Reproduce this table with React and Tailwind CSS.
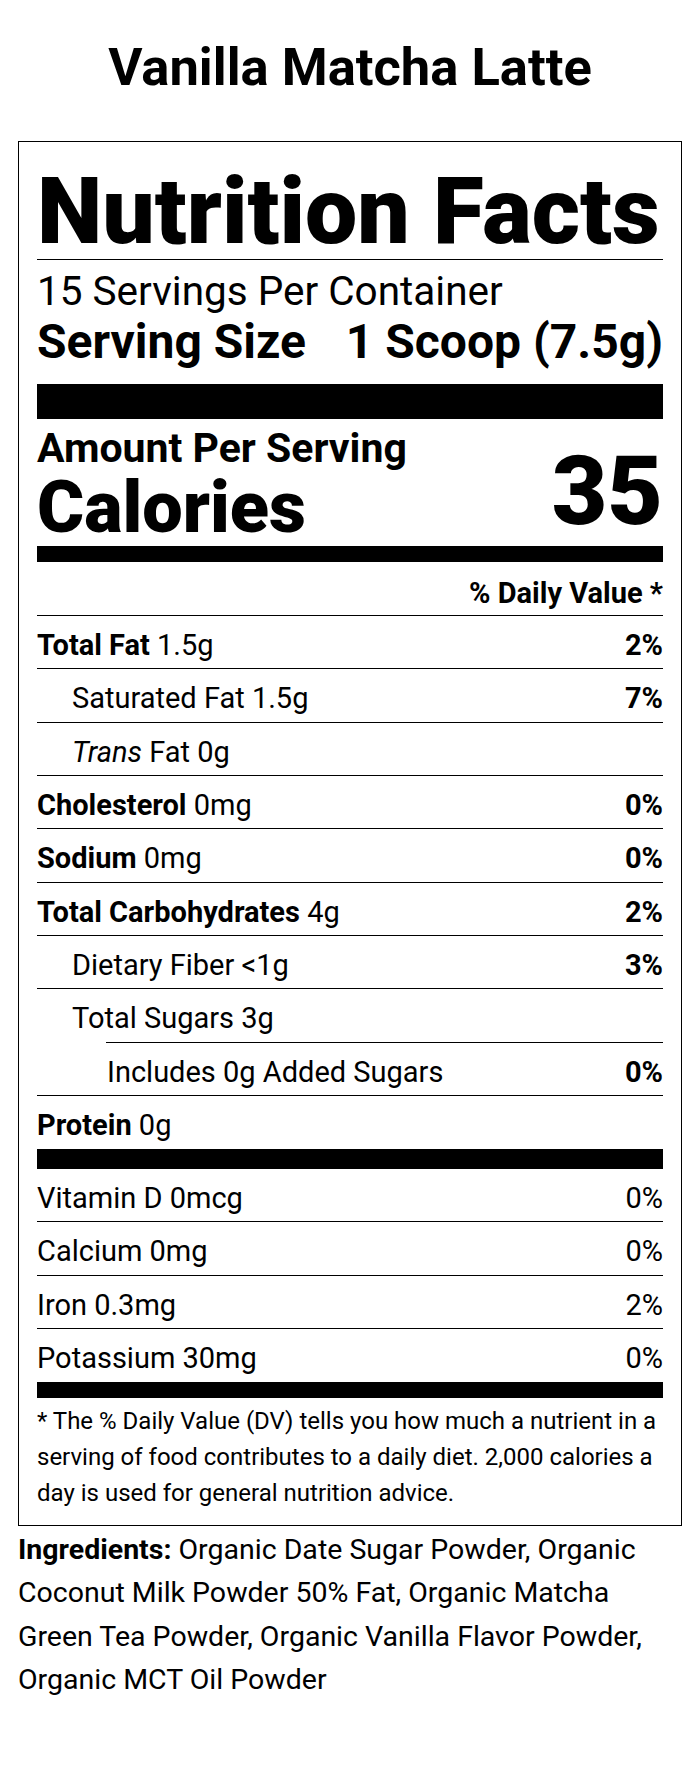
const font = { fontFamily: 'Roboto, "Noto Sans", sans-serif' }

const rows = [
  { bold: 'Total Fat', rest: ' 1.5g', dv: '2%' },
  { label: 'Saturated Fat 1.5g', dv: '7%', indent: 1 },
  { trans: true, indent: 1 },
  { bold: 'Cholesterol', rest: ' 0mg', dv: '0%' },
  { bold: 'Sodium', rest: ' 0mg', dv: '0%' },
  { bold: 'Total Carbohydrates', rest: ' 4g', dv: '2%' },
  { label: 'Dietary Fiber <1g', dv: '3%', indent: 1 },
  { label: 'Total Sugars 3g', indent: 1, lineIndent: true },
  { label: 'Includes 0g Added Sugars', dv: '0%', indent: 2 },
]

const vitamins = [
  { label: 'Vitamin D 0mcg', dv: '0%' },
  { label: 'Calcium 0mg', dv: '0%' },
  { label: 'Iron 0.3mg', dv: '2%' },
]

function Row({ row, last }) {
  const pad = row.indent === 2 ? 'pl-[70px]' : row.indent === 1 ? 'pl-[35px]' : ''
  return (
    <div>
      <div className={`flex justify-between h-[52.33px] pt-[5.8px] text-[29px] leading-[46.5px] ${pad}`}>
        <span>
          {row.trans ? (
            <>
              <i>Trans</i> Fat 0g
            </>
          ) : row.bold ? (
            <>
              <b>{row.bold}</b>
              {row.rest}
            </>
          ) : (
            row.label
          )}
        </span>
        {row.dv && <b>{row.dv}</b>}
      </div>
      {!last && <div className={`h-px bg-black ${row.lineIndent ? 'ml-[69px]' : ''}`} />}
    </div>
  )
}

export default function App() {
  return (
    <div className="min-h-screen bg-white text-black pt-[37px]" style={font}>
      <h1 className="text-center text-[52.5px] leading-[60px] font-bold">Vanilla Matcha Latte</h1>

      <div className="w-[664px] mx-auto mt-[44px] border border-black px-[18px] pt-[24px] pb-[14px]">
        <div className="text-[93px] leading-[92px] font-black">Nutrition Facts</div>
        <div className="h-px bg-black mt-[1px]" />
        <div className="mt-[9.15px] text-[40.5px] leading-[44px]">15 Servings Per Container</div>
        <div className="mt-[5.55px] flex justify-between text-[48px] leading-[46px] font-bold">
          <span>Serving Size</span>
          <span>1 Scoop (7.5g)</span>
        </div>
        <div className="h-[35px] bg-black mt-[19.5px]" />

        <div className="flex justify-between items-end">
          <div>
            <div className="mt-[7px] text-[41px] leading-[44px] font-bold">Amount Per Serving</div>
            <div className="mt-[3.4px] text-[72px] leading-[68px] font-black">Calories</div>
          </div>
          <div className="text-[96px] leading-[96px] font-black mb-[2.2px]">35</div>
        </div>

        <div className="h-[16px] bg-black mt-[4.6px]" />
        <div className="mt-[16.1px] text-right text-[29px] leading-[30px] font-bold">% Daily Value *</div>
        <div className="h-px bg-black mt-[6.9px]" />

        {rows.map((r, i) => (
          <Row key={i} row={r} />
        ))}
        <Row row={{ bold: 'Protein', rest: ' 0g' }} last />
        <div className="h-[20px] bg-black mt-[0.67px]" />

        {vitamins.map((v, i) => (
          <div key={i}>
            <div className="flex justify-between h-[52.33px] pt-[5.8px] text-[29px] leading-[46.5px]">
              <span>{v.label}</span>
              <span>{v.dv}</span>
            </div>
            <div className="h-px bg-black" />
          </div>
        ))}
        <div className="flex justify-between h-[53px] pt-[5.8px] text-[29px] leading-[46.5px]">
          <span>Potassium 30mg</span>
          <span>0%</span>
        </div>
        <div className="h-[16px] bg-black" />

        <p className="mt-[5px] text-[24px] leading-[36px]">
          * The % Daily Value (DV) tells you how much a nutrient in a<br />
          serving of food contributes to a daily diet. 2,000 calories a<br />
          day is used for general nutrition advice.
        </p>
      </div>

      <p className="w-[664px] mx-auto mt-[2px] text-[28.5px] leading-[43.33px]">
        <b>Ingredients:</b> Organic Date Sugar Powder, Organic<br />
        Coconut Milk Powder 50% Fat, Organic Matcha<br />
        Green Tea Powder, Organic Vanilla Flavor Powder,<br />
        Organic MCT Oil Powder
      </p>
    </div>
  )
}
